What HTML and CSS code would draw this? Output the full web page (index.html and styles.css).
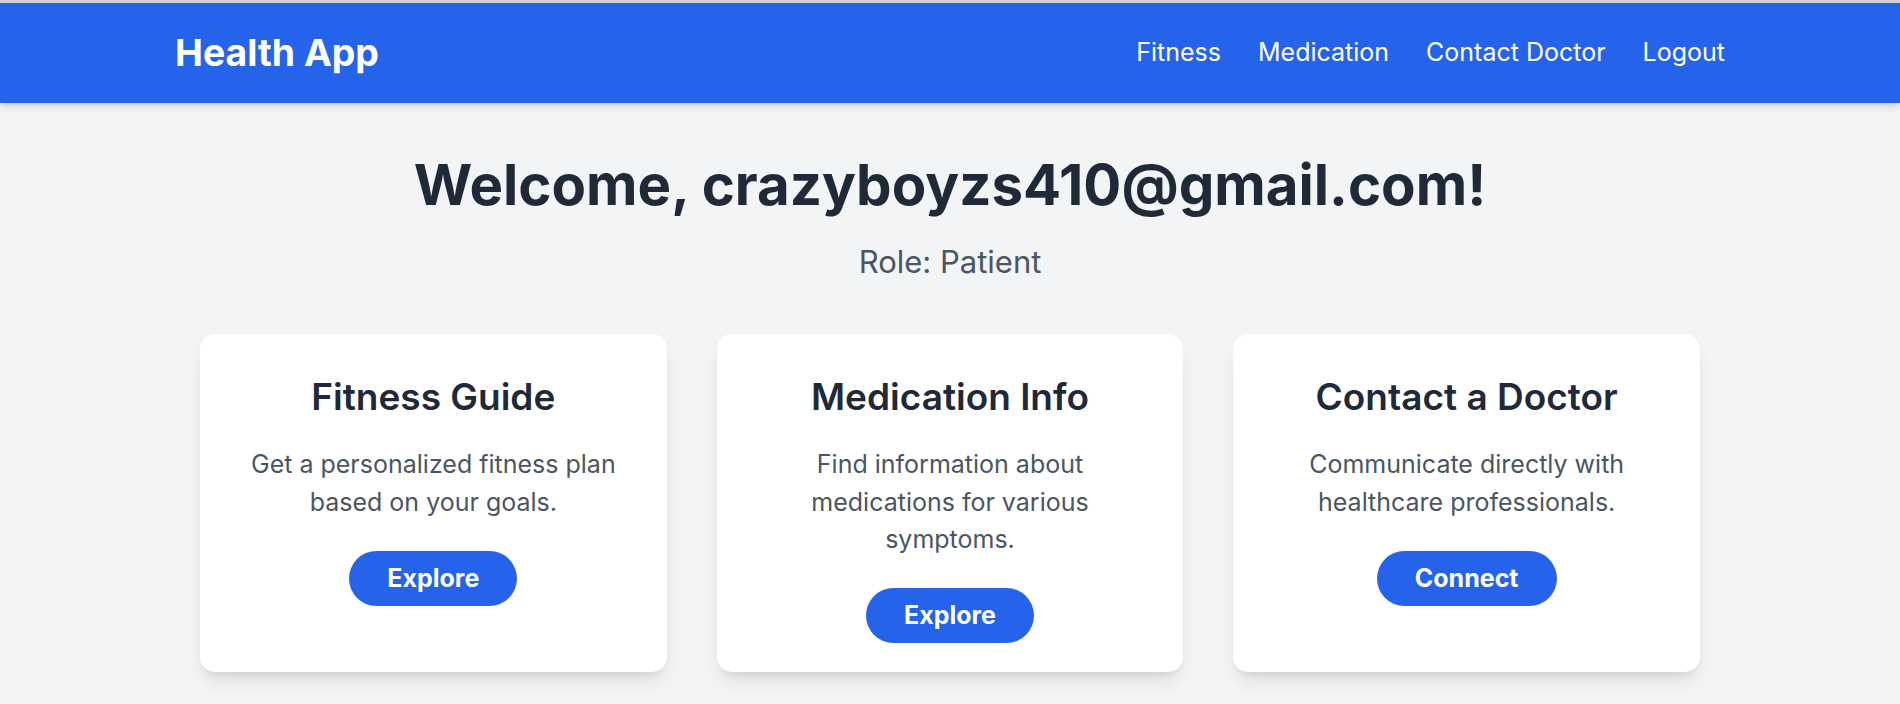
FILE: index.html
```html
<!DOCTYPE html>
<html lang="en">
<head>
<meta charset="utf-8">
<title>Health App</title>
<link rel="stylesheet" href="styles.css">
</head>
<body>
<div class="topline"></div>
<nav class="navbar">
  <div class="nav-inner">
    <a class="brand" href="#">Health App</a>
    <div class="nav-links">
      <a href="#">Fitness</a>
      <a href="#">Medication</a>
      <a href="#">Contact Doctor</a>
      <a href="#">Logout</a>
    </div>
  </div>
</nav>
<main class="main">
  <h1 class="welcome">Welcome, crazyboyzs410@gmail.com!</h1>
  <p class="role">Role: Patient</p>
  <section class="cards">
    <div class="card">
      <h2 class="card-title">Fitness Guide</h2>
      <p class="card-text">Get a personalized fitness plan based on your goals.</p>
      <a class="btn" href="#">Explore</a>
    </div>
    <div class="card">
      <h2 class="card-title">Medication Info</h2>
      <p class="card-text">Find information about medications for various symptoms.</p>
      <a class="btn" href="#">Explore</a>
    </div>
    <div class="card">
      <h2 class="card-title">Contact a Doctor</h2>
      <p class="card-text">Communicate directly with healthcare professionals.</p>
      <a class="btn" href="#">Connect</a>
    </div>
  </section>
</main>
</body>
</html>
```
FILE: styles.css
```css
* { box-sizing: border-box; }
html, body { margin: 0; padding: 0; }
body {
  background: #f3f4f6;
  font-family: Inter, "Noto Sans", "Liberation Sans", sans-serif;
  color: #1f2937;
  min-height: 704px;
}
a { text-decoration: none; color: inherit; }
.topline { height: 3px; background: #d2d2d2; }
.navbar {
  background: #2563eb;
  height: 100px;
  box-shadow: 0 5px 8px -1px rgba(0,0,0,0.12), 0 2px 5px -2px rgba(0,0,0,0.1);
  position: relative;
  z-index: 1;
}
.nav-inner {
  max-width: 1550px;
  margin: 0 auto;
  height: 100%;
  display: flex;
  align-items: center;
  justify-content: space-between;
}
.brand {
  color: #fff;
  font-size: 37.4px;
  font-weight: 700;
  line-height: 40px;
}
.nav-links {
  display: flex;
  gap: 37px;
  padding-bottom: 2px;
}
.nav-links a {
  color: #fff;
  font-size: 25px;
  line-height: 32px;
}
.main {
  padding-top: 52.5px;
  text-align: center;
}
.welcome {
  margin: 0;
  font-size: 56.4px;
  line-height: 57px;
  font-weight: 700;
  color: #1f2937;
}
.role {
  margin: 29.5px 0 0;
  font-size: 31px;
  line-height: 40px;
  color: #4b5563;
}
.cards {
  max-width: 1500px;
  margin: 52px auto 0;
  display: grid;
  grid-template-columns: repeat(3, 1fr);
  gap: 50px;
}
.card {
  background: #fff;
  border-radius: 15px;
  padding: 40px 30px 29px;
  box-shadow: 0 12px 18px -4px rgba(0,0,0,0.1), 0 5px 8px -5px rgba(0,0,0,0.1);
  display: flex;
  flex-direction: column;
  align-items: center;
}
.card-title {
  margin: 0;
  font-size: 37px;
  line-height: 45px;
  font-weight: 600;
  color: #1f2937;
}
.card-text {
  margin: 27px 0 0;
  font-size: 25px;
  line-height: 37.5px;
  color: #4b5563;
}
.btn {
  margin-top: 29.5px;
  display: inline-block;
  background: #2563eb;
  color: #fff;
  font-size: 25px;
  line-height: 35px;
  font-weight: 700;
  padding: 10px 38px;
  border-radius: 9999px;
}
```
